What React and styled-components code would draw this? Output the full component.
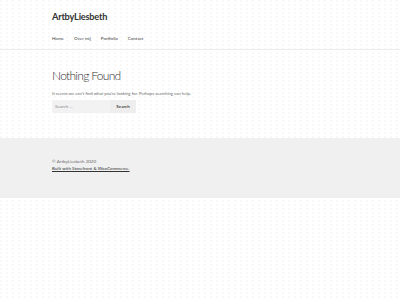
import React from 'react'
import styled, { createGlobalStyle } from 'styled-components'

const Global = createGlobalStyle`
  html, body {
    margin: 0;
    padding: 0;
    background-color: #ffffff;
    background-image: radial-gradient(circle at 1px 1px, #f8f8f8 0.8px, transparent 1.2px);
    background-size: 6px 4px;
    font-family: "Source Sans Pro", Lato, "Open Sans", sans-serif;
    color: #6d6d6d;
  }
`

function App() {
  return (
    <>
      <Global />
      <Header>
        <Inner>
          <Brand>ArtbyLiesbeth</Brand>
          <Nav>
            <NavLink>Home</NavLink>
            <NavLink>Over mij</NavLink>
            <NavLink>Portfolio</NavLink>
            <NavLink>Contact</NavLink>
          </Nav>
        </Inner>
      </Header>
      <Main>
        <Inner>
          <Title>Nothing Found</Title>
          <Text>It seems we can&rsquo;t find what you&rsquo;re looking for. Perhaps searching can help.</Text>
          <SearchForm>
            <SearchInput placeholder="Search …" />
            <SearchButton>Search</SearchButton>
          </SearchForm>
        </Inner>
      </Main>
      <Footer>
        <Inner>
          <Copy>© ArtbyLiesbeth 2020</Copy>
          <Credit>Built with Storefront &amp; WooCommerce.</Credit>
        </Inner>
      </Footer>
    </>
  )
}

export default App

const Inner = styled.div`
  padding: 0 52px;
`

const Header = styled.header`
  border-bottom: 1px solid #ececec;
  padding-top: 11px;
  height: 38px;
`

const Brand = styled.div`
  font-size: 9.2px;
  font-weight: 700;
  color: #333333;
  letter-spacing: -0.2px;
  line-height: 12px;
`

const Nav = styled.nav`
  display: flex;
  gap: 10px;
  margin-top: 12px;
`

const NavLink = styled.span`
  font-size: 4.5px;
  color: #404040;
  line-height: 8px;
`

const Main = styled.main`
  padding-top: 18px;
  height: 70px;
`

const Title = styled.h1`
  margin: 0;
  font-size: 12px;
  font-weight: 300;
  color: #333333;
  line-height: 16px;
  letter-spacing: -0.7px;
`

const Text = styled.p`
  margin: 6px 0 0;
  font-size: 4.3px;
  line-height: 7px;
  color: #6d6d6d;
`

const SearchForm = styled.div`
  display: flex;
  margin-top: 3px;
`

const SearchInput = styled.input`
  width: 58px;
  height: 13px;
  box-sizing: border-box;
  border: none;
  background: #f2f2f2;
  font-family: inherit;
  font-size: 4.5px;
  padding: 0 3px;
  color: #666;
  outline: none;
  &::placeholder {
    color: #8a8a8a;
  }
`

const SearchButton = styled.button`
  width: 26px;
  height: 13px;
  border: none;
  background: #eeeeee;
  font-family: inherit;
  font-size: 4.5px;
  font-weight: 600;
  color: #333;
  padding: 0;
`

const Footer = styled.footer`
  background: #f0f0f0;
  height: 60px;
  padding-top: 20px;
  box-sizing: border-box;
`

const Copy = styled.div`
  font-size: 4.5px;
  line-height: 7px;
  color: #6d6d6d;
`

const Credit = styled.a`
  display: block;
  font-size: 4.5px;
  line-height: 7px;
  color: #333;
  text-decoration: underline;
`
